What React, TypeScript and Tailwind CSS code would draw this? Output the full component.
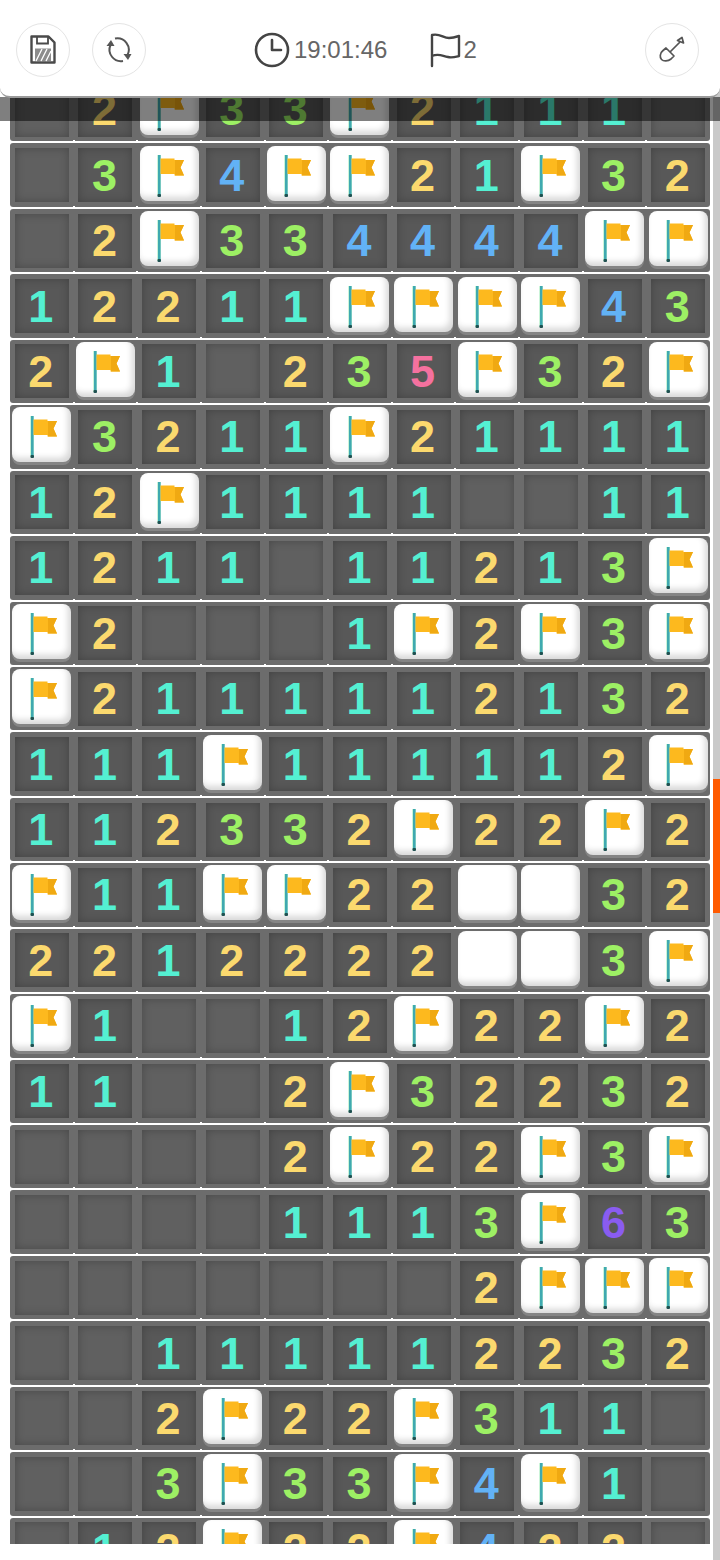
type CellValue = '' | 'F' | 'W' | 1 | 2 | 3 | 4 | 5 | 6;

const F = 'F';
const W = 'W';
const _ = '';

const board: CellValue[][] = [
  [_, 2, F, 3, 3, F, 2, 1, 1, 1, _],
  [_, 3, F, 4, F, F, 2, 1, F, 3, 2],
  [_, 2, F, 3, 3, 4, 4, 4, 4, F, F],
  [1, 2, 2, 1, 1, F, F, F, F, 4, 3],
  [2, F, 1, _, 2, 3, 5, F, 3, 2, F],
  [F, 3, 2, 1, 1, F, 2, 1, 1, 1, 1],
  [1, 2, F, 1, 1, 1, 1, _, _, 1, 1],
  [1, 2, 1, 1, _, 1, 1, 2, 1, 3, F],
  [F, 2, _, _, _, 1, F, 2, F, 3, F],
  [F, 2, 1, 1, 1, 1, 1, 2, 1, 3, 2],
  [1, 1, 1, F, 1, 1, 1, 1, 1, 2, F],
  [1, 1, 2, 3, 3, 2, F, 2, 2, F, 2],
  [F, 1, 1, F, F, 2, 2, W, W, 3, 2],
  [2, 2, 1, 2, 2, 2, 2, W, W, 3, F],
  [F, 1, _, _, 1, 2, F, 2, 2, F, 2],
  [1, 1, _, _, 2, F, 3, 2, 2, 3, 2],
  [_, _, _, _, 2, F, 2, 2, F, 3, F],
  [_, _, _, _, 1, 1, 1, 3, F, 6, 3],
  [_, _, _, _, _, _, _, 2, F, F, F],
  [_, _, 1, 1, 1, 1, 1, 2, 2, 3, 2],
  [_, _, 2, F, 2, 2, F, 3, 1, 1, _],
  [_, _, 3, F, 3, 3, F, 4, F, 1, _],
  [_, 1, 2, F, 2, 2, F, 4, 2, 2, _],
];

const numberColors: Record<number, string> = {
  1: 'text-[#54f0d2]',
  2: 'text-[#fbd96e]',
  3: 'text-[#9df064]',
  4: 'text-[#62b2f6]',
  5: 'text-[#f5719f]',
  6: 'text-[#8a5cf0]',
};

function FlagIcon() {
  return (
    <svg width="38" height="46" viewBox="0 0 38 46" className="mt-[3px]">
      <rect x="7" y="3" width="4" height="41" fill="#a8ecc0" opacity="0.6" />
      <rect x="8" y="3" width="2.6" height="41" fill="#3fa9b0" />
      <rect x="7.5" y="42" width="3.5" height="3" rx="1" fill="#1f5050" />
      <path d="M10.5 6.5h14v1.5h9.5l-3.5 7.500 3.500 8h-9.500v-1.500h-14z" fill="#fdb91e" />
      <path d="M25 8h9l-3.500 7.500 3.500 8h-9z" fill="#f0a912" />
    </svg>
  );
}

function Cell({ value }: { value: CellValue }) {
  if (value === 'F' || value === 'W') {
    return (
      <div className="w-[59px] h-[55px] -mt-[4px] rounded-[8px] bg-white shadow-[inset_-3px_-4px_6px_rgba(0,0,0,0.16),0_3px_0_#858585] flex items-center justify-center">
        {value === 'F' && <FlagIcon />}
      </div>
    );
  }
  return (
    <div
      className={`w-[54px] h-[54px] shadow-[inset_0_0_10px_rgba(0,0,0,0.25)] flex items-center justify-center ${
        value === '' ? 'bg-[#606060]' : 'bg-[#585858]'
      }`}
    >
      {value !== '' && (
        <span className={`text-[45px] leading-none font-bold -ml-[2px] ${numberColors[value]}`}>{value}</span>
      )}
    </div>
  );
}

function SaveIcon() {
  return (
    <svg width="26" height="29" viewBox="0 0 26 29" fill="none">
      <path d="M1.500 1.500h17l6 6v20h-23z" stroke="#4a4a4a" strokeWidth="2.400" strokeLinejoin="round" />
      <path d="M7 1.500v7h11v-7" stroke="#4a4a4a" strokeWidth="1.800" />
      <rect x="5" y="13.500" width="16" height="12.500" fill="#8c8c8c" />
      <path d="M6 26l6-12M11 26l6-12M16 26l5-10" stroke="#fff" strokeWidth="1.300" />
    </svg>
  );
}

function RefreshIcon() {
  return (
    <svg width="28" height="28" viewBox="0 0 28 28" fill="none" stroke="#555" strokeWidth="2">
      <path d="M10 2.500A11.500 11.500 0 0 1 22.500 19" />
      <path d="M18 25A11.500 11.500 0 0 1 5.500 9" />
      <path d="M18.500 18h8l-3.500 6z" fill="#555" stroke="none" />
      <path d="M1.500 10h8L6 4z" fill="#555" stroke="none" />
    </svg>
  );
}

function ShovelIcon() {
  return (
    <svg width="28" height="28" viewBox="0 0 28 28" fill="none" stroke="#555" strokeWidth="1.700" strokeLinejoin="round">
      <path d="M12 16L22 6" />
      <path d="M19.500 4.500L24 1.500l1.500 5.500z" />
      <path d="M8 12l8 8-3 3c-3 2.500-7.500 2.500-9.500 0.500s-1.500-6.500 1-8.500z" />
    </svg>
  );
}

function FlagCountIcon() {
  return (
    <svg width="34" height="36" viewBox="0 0 34 36" fill="none" stroke="#444" strokeWidth="2.400" strokeLinecap="round" strokeLinejoin="round">
      <path d="M3 34V3c8-2 11 3 17 3 4 0 7-1 10-2v20c-4 1-7 2-11 1-6-1-9-4-16-1" />
    </svg>
  );
}

function ClockIcon() {
  return (
    <svg width="38" height="38" viewBox="0 0 38 38" fill="none" stroke="#444" strokeWidth="2.600" strokeLinecap="round" strokeLinejoin="round">
      <circle cx="19" cy="19" r="16" />
      <path d="M19 9v10h9" />
    </svg>
  );
}

function RoundButton({ children }: { children: React.ReactNode }) {
  return (
    <button className="w-[54px] h-[54px] rounded-full border border-[#e4e4e4] flex items-center justify-center shrink-0">
      {children}
    </button>
  );
}

export default function App() {
  return (
    <div className="relative w-[720px] h-[1560px] overflow-hidden bg-white font-['Liberation_Sans',Arial,sans-serif]">
      <div className="h-[1544px] overflow-hidden pt-[78px] pl-[10px]">
        {board.map((row, rowIndex) => (
          <div key={rowIndex} className="w-[700px] h-[65.45px] flex flex-col">
            <div className="relative h-[63.45px] bg-[#6c6c6c] rounded-[3px] grid grid-cols-11 shrink-0">
              {row.map((value, colIndex) => (
                <div key={colIndex} className="relative flex items-center justify-center">
                  <Cell value={value} />
                  {colIndex > 0 && (
                    <div className="absolute left-[-1px] bottom-[-3px] w-[2px] h-[4px] bg-white" />
                  )}
                </div>
              ))}
            </div>
            <div className="h-[2px] bg-white" />
          </div>
        ))}
      </div>

      {/* scrollbar */}
      <div className="absolute top-0 bottom-0 right-0 w-[7px] bg-[#c9c9c9]">
        <div className="mt-[779px] h-[134px] bg-[#ff5a00]" />
      </div>

      {/* top bar */}
      <div className="absolute top-[97px] left-0 right-0 h-[24px] bg-black/50" />
      <div className="absolute top-0 left-0 right-0 h-[98px] bg-white rounded-b-[10px] border-b-2 border-[#9a9a9a] flex items-center px-[16px] pt-[3px] text-[#666] text-[24px]">
        <div className="flex gap-[22px]">
          <RoundButton>
            <SaveIcon />
          </RoundButton>
          <RoundButton>
            <RefreshIcon />
          </RoundButton>
        </div>
        <div className="flex items-center ml-[107px]">
          <ClockIcon />
          <span className="ml-[3px]">19:01:46</span>
        </div>
        <div className="flex items-center ml-[42px]">
          <FlagCountIcon />
          <span>2</span>
        </div>
        <div className="ml-auto mr-[5px]">
          <RoundButton>
            <ShovelIcon />
          </RoundButton>
        </div>
      </div>
    </div>
  );
}
